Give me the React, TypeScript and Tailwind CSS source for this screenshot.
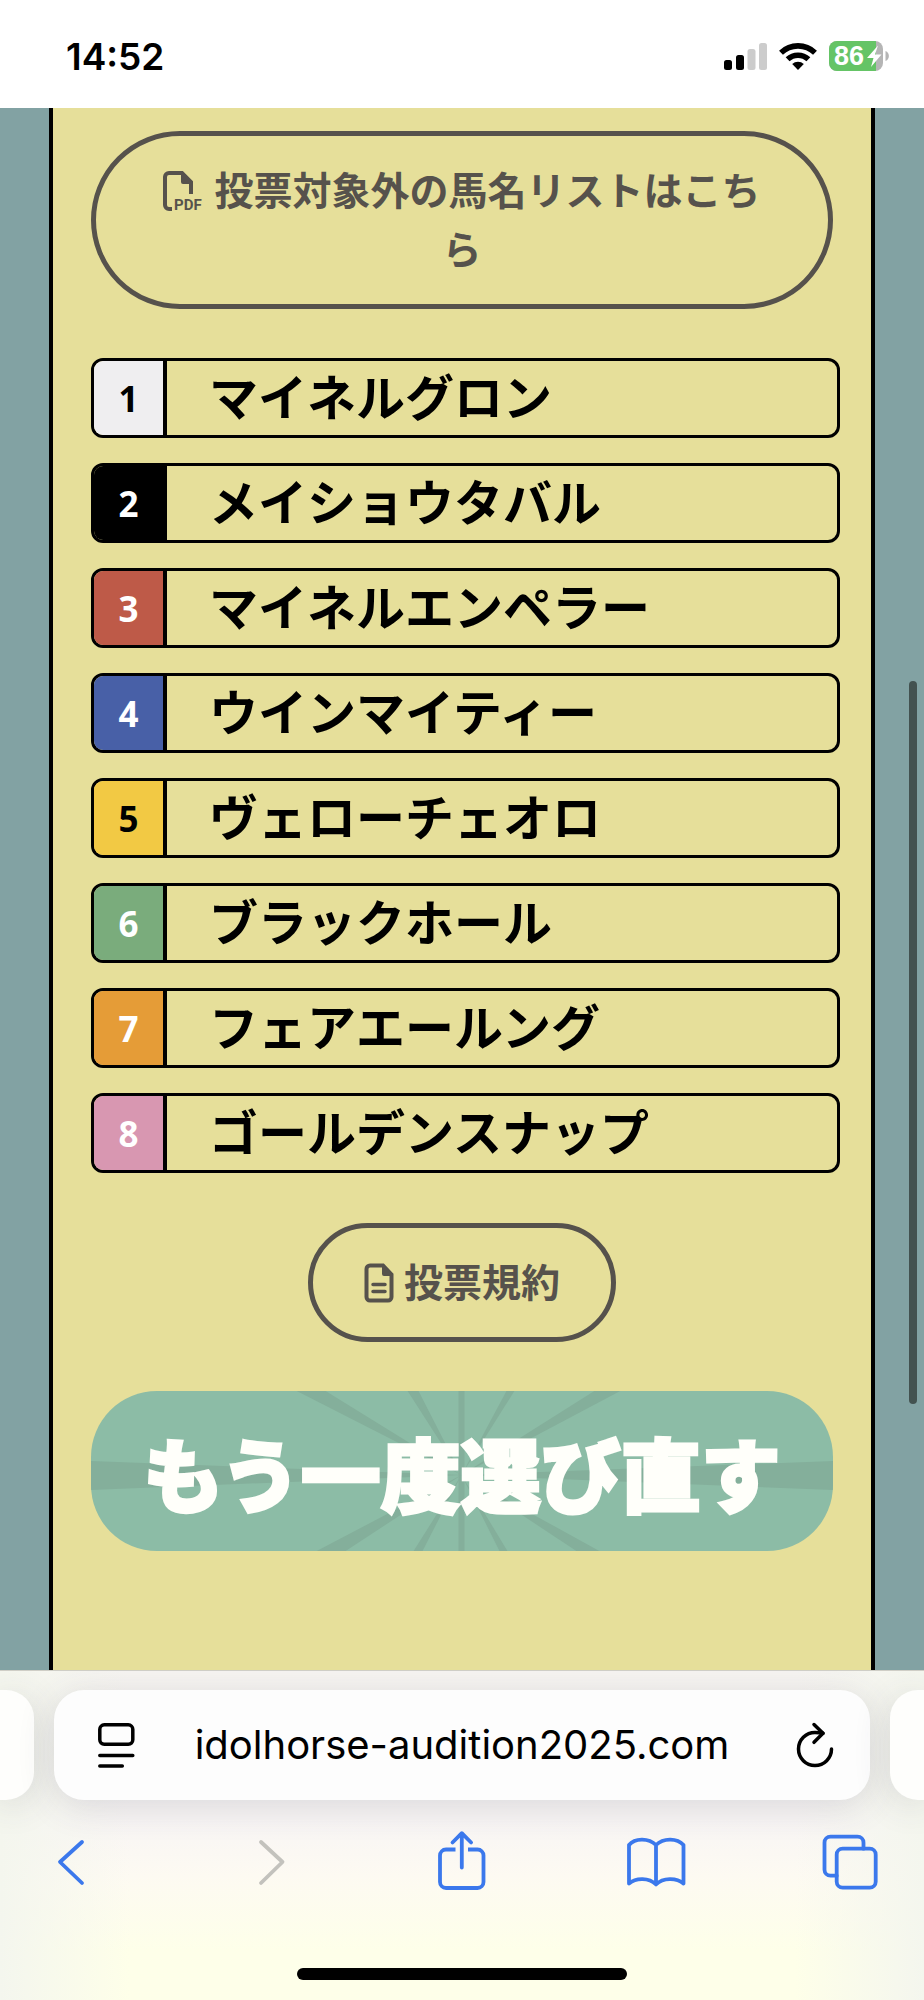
import type { ReactNode } from 'react'
import clsx from 'clsx'

type Horse = {
  name: string
  cell: string
}

const HORSES: Horse[] = [
  { name: 'マイネルグロン', cell: 'bg-[#efeef0] text-black' },
  { name: 'メイショウタバル', cell: 'bg-black text-white' },
  { name: 'マイネルエンペラー', cell: 'bg-[#be5a48] text-white' },
  { name: 'ウインマイティー', cell: 'bg-[#4860a7] text-white' },
  { name: 'ヴェローチェオロ', cell: 'bg-[#f2c944] text-black' },
  { name: 'ブラックホール', cell: 'bg-[#7aac7c] text-white' },
  { name: 'フェアエールング', cell: 'bg-[#e59c37] text-white' },
  { name: 'ゴールデンスナップ', cell: 'bg-[#d897b1] text-white' },
]

// Wedges of the sunburst, all meeting in the middle of the button
const RAYS = [
  '0,70 371,84 0,99',
  '206,0 235,0 371,84',
  '317,0 328,0 371,84',
  '368,0 374,0 374,160 368,160',
  '416,0 424,0 371,84',
  '504,0 530,0 371,84',
  '743,70 371,84 743,99',
  '226,160 255,160 371,84',
  '323,160 332,160 371,84',
  '409,160 417,160 371,84',
  '486,160 509,160 371,84',
]

function StatusBar() {
  return (
    <header className="flex h-[108px] items-center justify-between bg-white pl-[66px] pr-[35px] pt-1">
      <time className="font-['Inter',sans-serif] text-[37px] font-semibold leading-none text-black">
        14:52
      </time>
      <div className="flex items-center">
        <svg width="43" height="28" viewBox="0 0 43 28" role="img" aria-label="Signal">
          <rect x="0" y="18" width="8" height="10" rx="2.5" />
          <rect x="12" y="13" width="8" height="15" rx="2.5" />
          <rect x="23.5" y="7" width="8" height="21" rx="2.5" fill="#ccc" />
          <rect x="35" y="1" width="8" height="27" rx="2.5" fill="#ccc" />
        </svg>
        <svg className="ml-3" width="38" height="28" viewBox="0 0 38 28" role="img" aria-label="Wi-Fi">
          <g fill="none" stroke="#000" strokeWidth="5.6">
            <path d="M2 10.7a24.5 24.5 0 0 1 34 0" />
            <path d="M8.6 17.3a15.2 15.2 0 0 1 20.8 0" />
          </g>
          <path d="M13.2 22a8.4 8.4 0 0 1 11.6 0L19 28z" />
        </svg>
        <svg
          className="ml-3 overflow-visible"
          width="60"
          height="30"
          viewBox="0 0 60 30"
          role="img"
          aria-label="Battery 86%"
        >
          <clipPath id="battery">
            <rect width="54" height="30" rx="8" />
          </clipPath>
          <g clipPath="url(#battery)">
            <rect width="54" height="30" fill="#b5b5b5" />
            <rect width="47" height="30" fill="#65c466" />
          </g>
          <path d="M56.5 10c4.5 1.5 4.5 8.5 0 10z" fill="#b5b5b5" />
          <path d="M49 4.5 38 17h6.5L42 26l10.5-12.5H46z" fill="#fff" />
          <text
            x="5"
            y="24"
            fill="#fff"
            className="font-['Liberation_Sans',sans-serif] text-[27px] font-bold"
          >
            86
          </text>
        </svg>
      </div>
    </header>
  )
}

function PdfIcon() {
  return (
    <svg
      className="mr-2.5 inline-block overflow-visible align-[-6px]"
      width="41"
      height="40"
      viewBox="0 0 41 40"
      aria-hidden
    >
      <path
        d="M9 38H6a4 4 0 0 1-4-4V6a4 4 0 0 1 4-4h13l9 9v12"
        fill="none"
        stroke="currentColor"
        strokeWidth="4"
      />
      <path d="M18 2h2l9.5 9.5V13H20a2 2 0 0 1-2-2z" fill="currentColor" />
      <text
        x="11"
        y="39"
        fill="currentColor"
        className="font-['Roboto',sans-serif] text-[15px] font-bold"
      >
        PDF
      </text>
    </svg>
  )
}

function DocumentIcon() {
  return (
    <svg
      className="mr-2.5 inline-block align-[-6px]"
      width="30"
      height="40"
      viewBox="0 0 30 40"
      aria-hidden
    >
      <path
        d="M6 2.5h13l8.5 9V34a3.5 3.5 0 0 1-3.5 3.5H6A3.5 3.5 0 0 1 2.5 34V6A3.5 3.5 0 0 1 6 2.5z"
        fill="none"
        stroke="currentColor"
        strokeWidth="4"
      />
      <path d="M18 2h2l9 9.5V13h-9a2 2 0 0 1-2-2z" fill="currentColor" />
      <path
        d="M9 21.5h12M9 28.5h12"
        stroke="currentColor"
        strokeWidth="3.5"
        strokeLinecap="round"
      />
    </svg>
  )
}

function PillLink({ className, children }: { className?: string; children: ReactNode }) {
  return (
    <a
      href="#"
      className={clsx(
        'block rounded-[89px] border-[5px] border-[#56524c] pb-[27px] pt-[23px] text-center text-[39px] font-bold leading-[59px] text-[#56524c]',
        className,
      )}
    >
      {children}
    </a>
  )
}

function HorseRow({ horse, number }: { horse: Horse; number: number }) {
  return (
    <li className="flex h-20 overflow-hidden rounded-xl border-[3px] border-black">
      <span
        className={clsx(
          "flex w-[73px] shrink-0 items-center justify-center border-r-4 border-black font-['Noto_Sans',sans-serif] text-[35px] font-bold leading-none",
          horse.cell,
        )}
      >
        {number}
      </span>
      <span className="flex items-center pb-[7px] pl-[42px] text-[49px] font-bold leading-none text-black">
        {horse.name}
      </span>
    </li>
  )
}

function ToolbarButton({
  label,
  disabled,
  children,
}: {
  label: string
  disabled?: boolean
  children: ReactNode
}) {
  return (
    <button
      type="button"
      aria-label={label}
      disabled={disabled}
      className="text-[#3b78ec] disabled:text-[#c3c2bd]"
    >
      <svg
        width="60"
        height="60"
        viewBox="0 0 60 60"
        fill="none"
        stroke="currentColor"
        strokeWidth="3.8"
        strokeLinecap="round"
        strokeLinejoin="round"
        aria-hidden
      >
        {children}
      </svg>
    </button>
  )
}

function BrowserBar() {
  return (
    <footer className="overflow-hidden border-t border-[#cfcec6] bg-[linear-gradient(90deg,#f4f6ee_0%,transparent_14%,transparent_86%,#f4f6ee_100%),linear-gradient(180deg,#f7f5f2_0%,#f8f5f5_45%,#fdfaf2_62%,#feffe9_85%)] pb-5 pt-[19px]">
      <div className="flex gap-5">
        <div className="h-[110px] w-[34px] shrink-0 rounded-r-[28px] bg-[#fefefc] shadow-[0_6px_36px_rgba(60,60,80,0.16)]" />
        <div className="flex h-[110px] min-w-0 flex-1 items-center rounded-[30px] bg-[#fdfdfd] pl-[43px] pr-[35px] shadow-[0_6px_36px_rgba(60,60,80,0.16)]">
          <button type="button" aria-label="Page settings">
            <svg
              width="40"
              height="46"
              viewBox="0 0 40 46"
              fill="none"
              stroke="#000"
              strokeWidth="3.5"
              strokeLinecap="round"
              aria-hidden
            >
              <rect x="2.8" y="2.8" width="33" height="19.5" rx="4.5" />
              <path d="M2.8 33.5h33M2.8 44h22.5" />
            </svg>
          </button>
          <input
            type="text"
            aria-label="Address"
            readOnly
            value="idolhorse-audition2025.com"
            className="min-w-0 flex-1 bg-transparent pr-2 text-center font-['Inter',sans-serif] text-[40px] leading-[50px] text-black outline-none"
          />
          <button type="button" aria-label="Reload">
            <svg
              width="40"
              height="46"
              viewBox="0 0 40 46"
              fill="none"
              stroke="#000"
              strokeWidth="3.5"
              strokeLinecap="round"
              strokeLinejoin="round"
              aria-hidden
            >
              <path d="M36.5 27A16.5 16.5 0 1 1 20 10.5q4 0 8 .8" />
              <path d="m19 2.5 9 8.8-9 9" />
            </svg>
          </button>
        </div>
        <div className="h-[110px] w-[34px] shrink-0 rounded-l-[28px] bg-[#fefefc] shadow-[0_6px_36px_rgba(60,60,80,0.16)]" />
      </div>

      <nav className="mt-[30px] flex justify-between px-[42px]" aria-label="Browser">
        <ToolbarButton label="Back">
          <path d="M40 12 18 32l22 21" />
        </ToolbarButton>
        <ToolbarButton label="Forward" disabled>
          <path d="m24 12 21.5 20L24 53" />
        </ToolbarButton>
        <ToolbarButton label="Share">
          <path
            d="M23.5 19.5H14a6 6 0 0 0-6 6V52a6 6 0 0 0 6 6h31.5a6 6 0 0 0 6-6V25.5a6 6 0 0 0-6-6H36"
            strokeLinecap="butt"
          />
          <path d="M29.8 37.5V3.5M20.5 12.5l9.3-9.3 9.3 9.3" />
        </ToolbarButton>
        <ToolbarButton label="Bookmarks">
          <path d="M29 15C22 8 8 7.5 2 15v38.5c7-6 20-6 27 1 7-7 20.5-7 27.5-1V15C50 7.5 36 8 29 15zv39" />
        </ToolbarButton>
        <ToolbarButton label="Tabs">
          <rect x="14.7" y="18.7" width="39" height="39" rx="6" />
          <path d="M14.7 45.7H8.5a6 6 0 0 1-6-6v-27a6 6 0 0 1 6-6h27a6 6 0 0 1 6 6v6" />
        </ToolbarButton>
      </nav>

      <div className="mx-auto mt-[78px] h-3 w-[330px] rounded-full bg-black" />
    </footer>
  )
}

export default function App() {
  return (
    <div className="flex min-h-screen flex-col font-['Noto_Sans_CJK_JP',sans-serif]">
      <StatusBar />

      <main className="relative flex flex-1 flex-col bg-[#82a2a3] px-[49px]">
        <div className="flex-1 border-x-4 border-black bg-[#e6df9a] px-[38px] pb-[119px] pt-[23px]">
          <PillLink className="px-[60px]">
            <PdfIcon />
            投票対象外の馬名リストはこちら
          </PillLink>

          <ol className="-mr-[7px] mt-[49px] flex flex-col gap-[25px]">
            {HORSES.map((horse, i) => (
              <HorseRow key={horse.name} horse={horse} number={i + 1} />
            ))}
          </ol>

          <PillLink className="mx-auto mt-[50px] w-fit px-[51px]">
            <DocumentIcon />
            投票規約
          </PillLink>

          <button
            type="button"
            className="relative mt-[49px] flex h-40 w-full items-center justify-center overflow-hidden rounded-[66px] bg-[#8cbca6]"
          >
            <svg
              className="absolute inset-0 h-full w-full"
              viewBox="0 0 743 160"
              preserveAspectRatio="none"
              fill="#84af9b"
              aria-hidden
            >
              {RAYS.map((points) => (
                <polygon key={points} points={points} />
              ))}
            </svg>
            <span className="relative whitespace-nowrap text-[80px] font-black leading-none text-[#fffffa] [-webkit-text-stroke:3px_#fffffa]">
              もう一度選び直す
            </span>
          </button>
        </div>

        <div className="absolute right-[7px] top-[573px] h-[723px] w-2 rounded-full bg-[#435250]" />
      </main>

      <BrowserBar />
    </div>
  )
}
